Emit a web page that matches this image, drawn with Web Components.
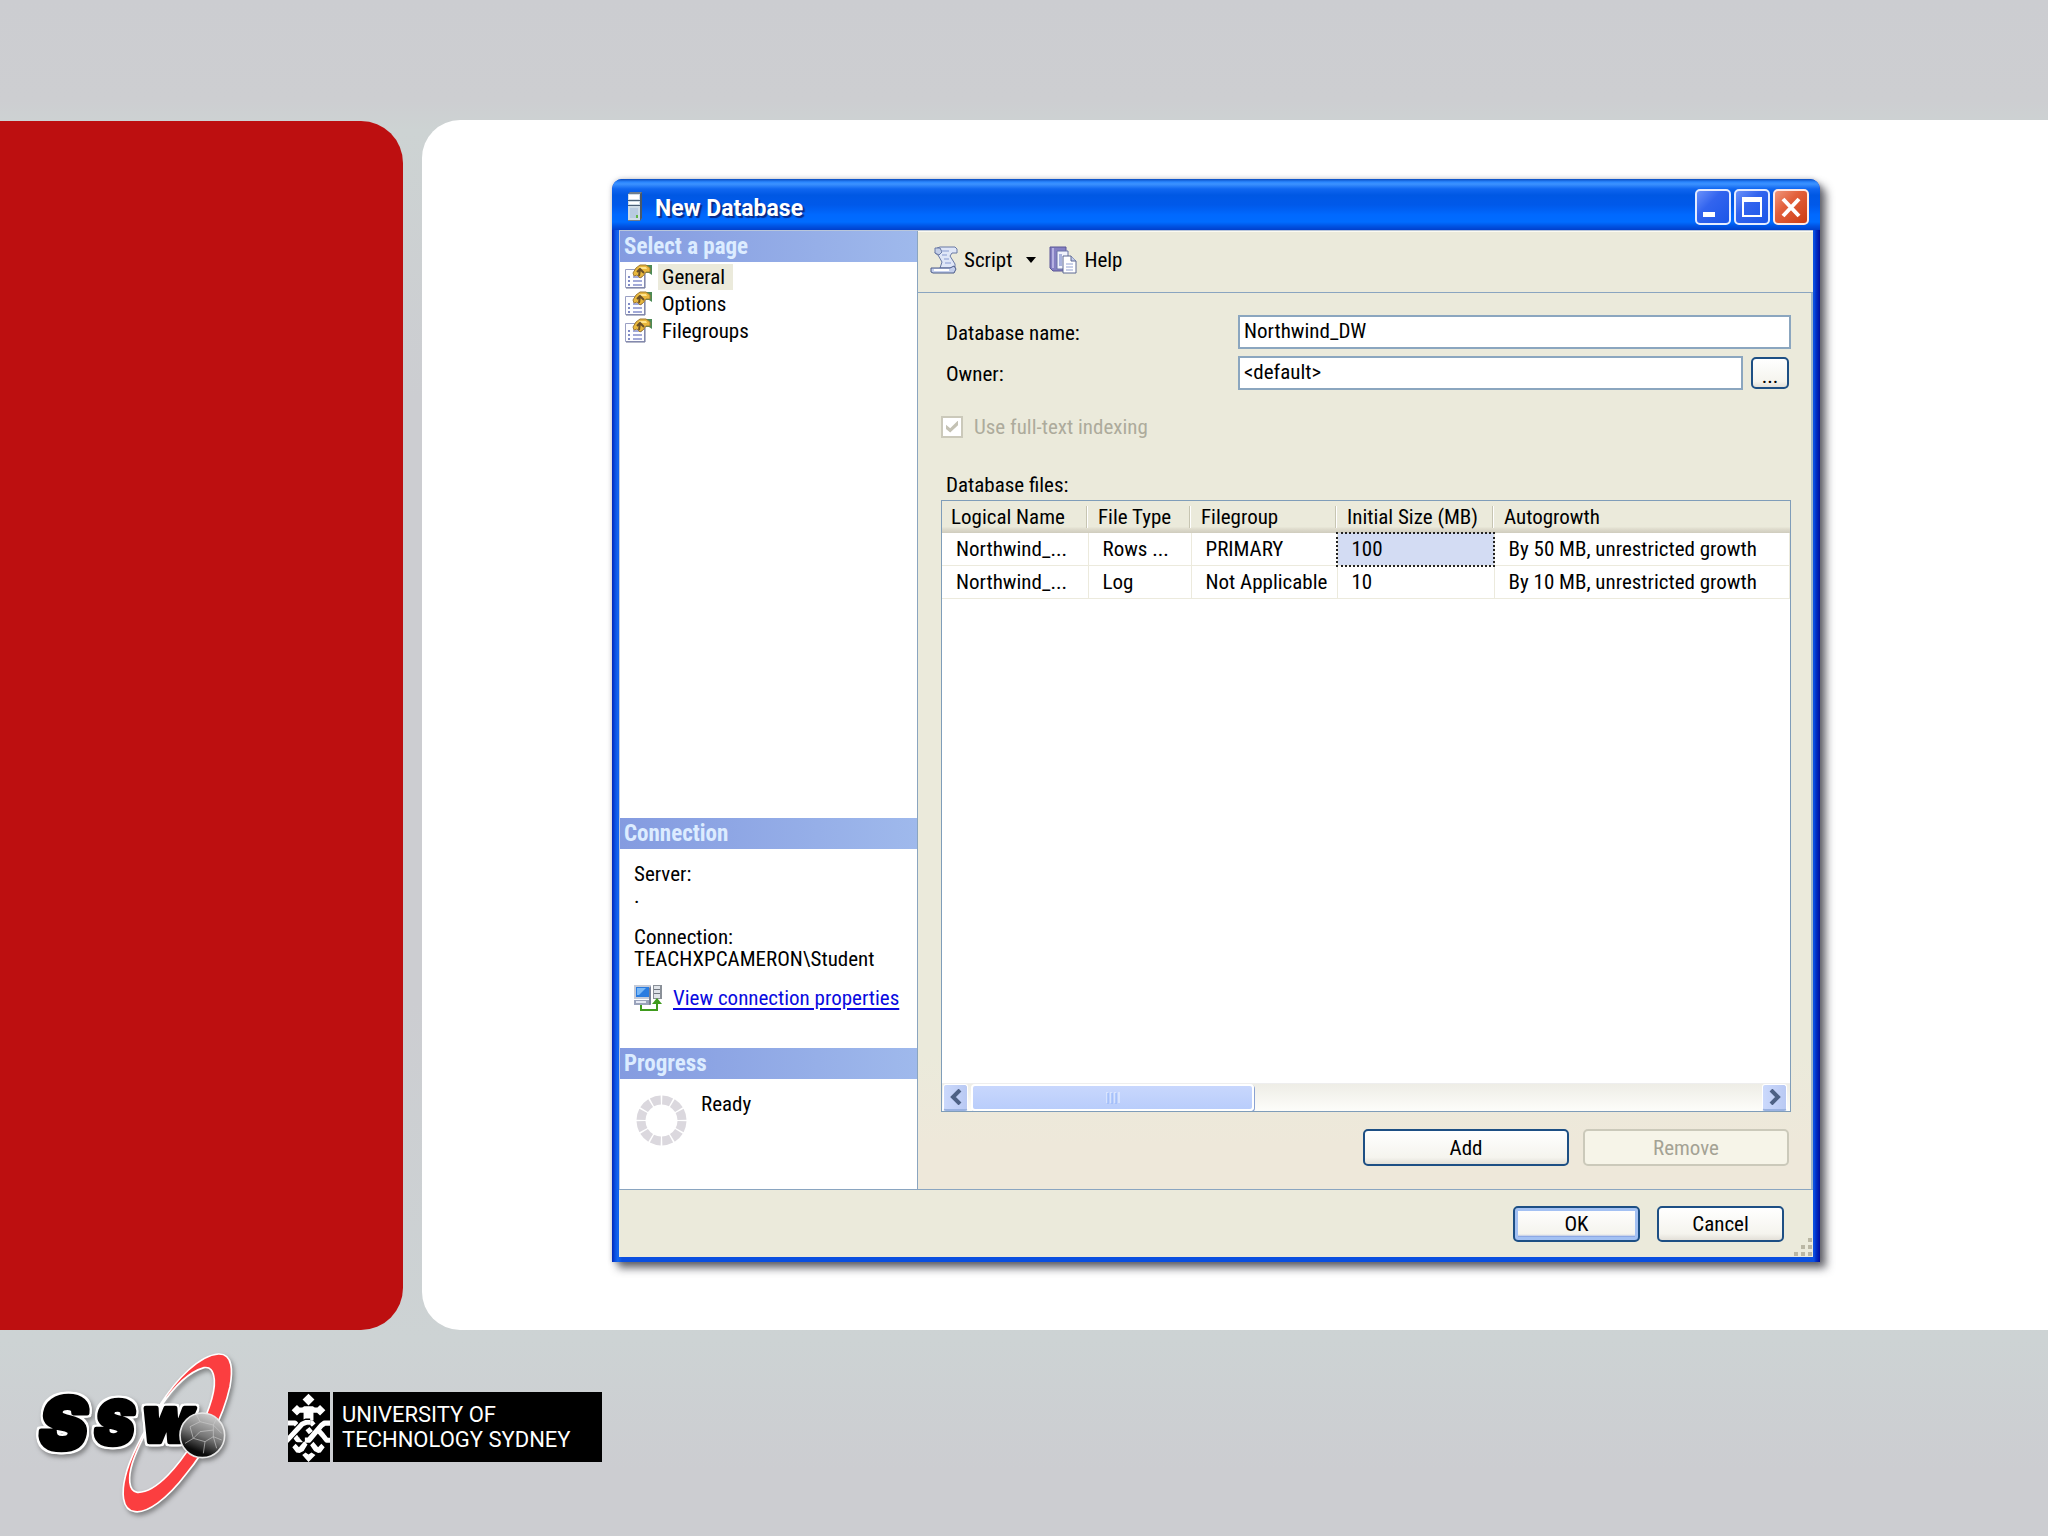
<!DOCTYPE html>
<html lang="en">
<head>
<meta charset="utf-8">
<title>New Database</title>
<style>
  html, body { margin: 0; min-height: 100%; }
  body {
    --ui: "Roboto Condensed", "Liberation Sans", sans-serif;
    --face: #ebeadb;
    --line: #8aa5c0;
    font: 21px/22px var(--ui);
    color: #000;
    background: #cccdd1;
  }
</style>
</head>
<body>
<slide-page>
  <xp-window caption="New Database">
    <page-sidebar slot="side"></page-sidebar>
    <database-pane slot="main"></database-pane>
    <xp-button slot="actions" kind="default">OK</xp-button>
    <xp-button slot="actions">Cancel</xp-button>
  </xp-window>
  <ssw-logo slot="logos"></ssw-logo>
  <uts-logo slot="logos"></uts-logo>
</slide-page>

<script>
function define(name, html, setup) {
  const t = document.createElement('template');
  t.innerHTML = html;
  customElements.define(name, class extends HTMLElement {
    connectedCallback() {
      if (this.shadowRoot) return;
      this.attachShadow({ mode: 'open' }).append(t.content.cloneNode(true));
      if (setup) setup(this, this.shadowRoot);
    }
  });
}

define('slide-page', `
<style>
  :host { display: grid; grid-template-rows: 120px auto 1fr; min-height: 100vh; overflow: hidden;
    background: linear-gradient(#cccdd1 0, #cdced1 100px, #cdd3d3 130px, #cccdd1 400px, #cccdd1 1000px, #cdd3d4 1340px, #cccdd1 1470px); }
  .row { grid-row: 2; display: flex; gap: 19px; }
  .red { flex: none; width: 403px; background: #bd0f10; border-radius: 0 42px 42px 0; margin-top: 1px; }
  .white { flex: 1; min-width: 0; background: #fff; border-radius: 38px 0 0 38px; padding: 59px 228px 68px 190px; }
  footer { grid-row: 3; display: flex; align-items: flex-start; gap: 48px; padding: 20px 0 0 24px; }
</style>
<div class="row"><aside class="red"></aside><main class="white"><slot></slot></main></div>
<footer><slot name="logos"></slot></footer>`);

define('xp-window', `
<style>
  :host { display: block; position: relative; border-radius: 10px 10px 0 0; padding: 0 7px 5px;
    background: linear-gradient(90deg, #0127b8 0, #0a4fe0 3px, #1467f0 6px, #0a4fe0 10px, #0a4fe0 calc(100% - 6px), #0030c8 calc(100% - 4px), #000e9c 100%);
    box-shadow: 6px 6px 9px rgba(40,40,50,.7), 0 0 5px rgba(90,90,110,.35); }
  header { display: flex; align-items: center; gap: 3px; height: 51px; margin: 0 -7px; padding: 4px 11px 0 14px; box-sizing: border-box;
    border-radius: 10px 10px 0 0;
    background: linear-gradient(#0a4cc0 0, #2a86ff 3px, #3c92ff 5px, #0f66f0 10px, #0058e4 16px, #0059ea 26px, #0069ff 36px, #006cff 43px, #0054e4 47px, #0040cc 51px); }
  h1 { margin: 0 auto 0 8px; font: bold 23px/28px Roboto, "Open Sans", sans-serif; color: #fff; text-shadow: 2px 2px 1px #0a2a86; padding-top: 4px; }
  .sys { width: 36px; height: 36px; padding: 0; border: 0; background: none; }
  svg { display: block; }
  .body { background: var(--face); border-top: 1px solid #b9c6da; }
  .split { display: grid; grid-template-columns: 298px 1fr; border-bottom: 1px solid var(--line); }
  .actions { display: flex; justify-content: flex-end; gap: 17px; padding: 16px 29px 15px; position: relative; }
  .actions ::slotted(*) { width: 127px; height: 36px; }
  .grip { position: absolute; right: 0; bottom: 0; }
</style>
<header>
  <svg width="18" height="30" viewBox="0 0 18 30">
    <path d="M2 2 4 0H16V26L14 29H2Z" fill="#6f7d8c"/><path d="M2 2H14V28H2Z" fill="#cfdce6"/>
    <path d="M3 3H13V7H3ZM3 10H13V12H3Z" fill="#fff"/><path d="M2 8H14V9H2ZM2 13H14V14H2Z" fill="#4c5f74"/>
    <path d="M4 16H12V26H4Z" fill="#b8cbe0"/><path d="M14 2 16 0V26L14 29Z" fill="#4b5967"/><path d="M10 23H12V26H10Z" fill="#5fb548"/>
  </svg>
  <h1></h1>
  <button class="sys" aria-label="Minimize"><svg width="36" height="36" viewBox="0 0 36 36">
    <defs><linearGradient id="b" x2="1" y2="1"><stop stop-color="#6f95fb"/><stop offset=".4" stop-color="#3264ee"/><stop offset="1" stop-color="#1a55e8"/></linearGradient></defs>
    <rect x="1" y="1" width="34" height="34" rx="4" fill="url(#b)" stroke="#e4ecff" stroke-width="2"/><path d="M8 23H20V28H8Z" fill="#fff"/></svg></button>
  <button class="sys" aria-label="Maximize"><svg width="36" height="36" viewBox="0 0 36 36">
    <defs><linearGradient id="b2" x2="1" y2="1"><stop stop-color="#6f95fb"/><stop offset=".4" stop-color="#3264ee"/><stop offset="1" stop-color="#1a55e8"/></linearGradient></defs>
    <rect x="1" y="1" width="34" height="34" rx="4" fill="url(#b2)" stroke="#e4ecff" stroke-width="2"/><path d="M8 8H28V28H8ZM10 13V26H26V13Z" fill="#fff" fill-rule="evenodd"/></svg></button>
  <button class="sys" aria-label="Close"><svg width="36" height="36" viewBox="0 0 36 36">
    <defs><linearGradient id="r" x2="1" y2="1"><stop stop-color="#f09a80"/><stop offset=".4" stop-color="#e2603c"/><stop offset="1" stop-color="#cc3a10"/></linearGradient></defs>
    <rect x="1" y="1" width="34" height="34" rx="4" fill="url(#r)" stroke="#ffeae6" stroke-width="2"/><path d="M10 10 26 27M26 10 10 27" stroke="#fff" stroke-width="4"/></svg></button>
</header>
<div class="body">
  <div class="split"><slot name="side"></slot><slot name="main"></slot></div>
  <div class="actions"><slot name="actions"></slot>
    <svg class="grip" width="20" height="20" viewBox="0 0 20 20"><path d="M15 1h4v4h-4zM8 8h4v4H8zM15 8h4v4h-4zM1 15h4v4H1zM8 15h4v4H8zM15 15h4v4h-4z" fill="#bab7a4"/></svg>
  </div>
</div>`, (host, root) => { root.querySelector('h1').textContent = host.getAttribute('caption'); });

define('xp-button', `
<style>
  :host { display: block; }
  button { width: 100%; height: 100%; box-sizing: border-box; padding: 0; border: 2px solid #1d4f84; border-radius: 5px; font: inherit; color: #000;
    background: linear-gradient(#fff, #f5f4ee 80%, #e3e0d8); }
  :host([kind=default]) button { box-shadow: inset 0 0 0 3px #a3c1f3, inset 0 -4px 2px #6c92e6; }
  :host([kind=browse]) button { padding-top: 5px; }
  button:disabled { border-color: #cbc9ba; background: #f6f4e8; color: #a4a294; }
</style>
<button><slot></slot></button>`, (host, root) => { root.querySelector('button').disabled = host.hasAttribute('disabled'); });

define('side-section', `
<style>
  :host { display: block; }
  h2 { margin: 0; height: 31px; padding-left: 4px; font: bold 23px/31px var(--ui); color: #dcecff;
    background: linear-gradient(90deg, #849be0, #9fb9ec); }
</style>
<h2></h2><slot></slot>`, (host, root) => { root.querySelector('h2').textContent = host.getAttribute('caption'); });

define('page-item', `
<style>
  :host { display: block; }
  button { display: flex; align-items: center; gap: 6px; height: 27px; padding: 0 0 0 4px; border: 0; background: none; font: inherit; color: #000; }
  span { padding: 2px 8px 2px 4px; }
  :host([selected]) span { background: #ebeadb; }
</style>
<button>
  <svg width="28" height="25" viewBox="0 0 28 25">
    <path d="M1.500 5.500H20.500V23.500H1.500Z" fill="#fdfdff" stroke="#9aa0c4"/><path d="M21 9V24H2" fill="none" stroke="#6d7296"/>
    <path d="M4 12H6V14H4ZM4 16H6V18H4ZM4 20H6V22H4Z" fill="#7f8ac4"/><path d="M9 13H18M9 17H18M9 21H18" stroke="#a2a9d8" stroke-width="2"/>
    <path d="M22 1H28V11L25 9H22Z" fill="#4d8a55"/>
    <path d="M9 9 12 4 16 1H22L26 4V8H22L19 12 16 14 13 11 10 12Z" fill="#e9b83c" stroke="#a07a34"/>
    <path d="M15 3H22L23 5H16Z" fill="#ffe48c"/><path d="M13 8 16 5 20 9M16 5 15 12" stroke="#6b5028" fill="none" stroke-width="2"/>
  </svg><span><slot></slot></span>
</button>`);

define('page-sidebar', `
<style>
  :host { display: flex; flex-direction: column; background: #fff; border-left: 1px solid #c3cbd8; }
  .pages { flex: 1; }
  .list { padding-top: 1px; }
  .conn { padding: 14px 14px 37px; }
  p { margin: 0 0 19px; }
  .link { display: flex; align-items: center; gap: 11px; margin-top: 15px; height: 26px; }
  .link svg { flex: none; }
  a { color: #0a0ae0; text-decoration-thickness: 2px; text-underline-offset: 3px; white-space: nowrap; }
  .last { margin: 0; }
  .prog { display: flex; gap: 14px; height: 94px; padding: 16px 0 0 16px; }
  .prog span { line-height: 18px; }
</style>
<side-section class="pages" caption="Select a page"><div class="list">
  <page-item selected>General</page-item><page-item>Options</page-item><page-item>Filegroups</page-item>
</div></side-section>
<side-section caption="Connection"><div class="conn">
  <p>Server:<br>.</p>
  <p class="last">Connection:<br>TEACHXPCAMERON\\Student</p>
  <div class="link">
    <svg width="28" height="26" viewBox="0 0 28 26">
      <path d="M0 0H17V14H0Z" fill="#c5cbd8"/><path d="M2 2H15V12H2Z" fill="#2a7ce0"/><path d="M3 3H12L5 10H3Z" fill="#79b8f7"/>
      <path d="M0 15H17V20H0Z" fill="#9aa3bb"/><path d="M2 16H12V18H2Z" fill="#e5e9f4"/><path d="M15 3 17 1V19L15 20Z" fill="#777f95"/>
      <path d="M19 0H28V14H19Z" fill="#8a9098"/><path d="M20 1H26V13H20Z" fill="#dfe3e8"/><path d="M20 4H26V5H20ZM20 8H26V9H20Z" fill="#6f7680"/>
      <path d="M7 20V25H23V18" fill="none" stroke="#3f9b1d" stroke-width="2"/><path d="M18 19 23 13 28 19Z" fill="#3f9b1d"/>
    </svg><a href="#properties">View connection properties</a>
  </div>
</div></side-section>
<side-section caption="Progress"><div class="prog">
  <svg width="51" height="51" viewBox="0 0 51 51"><circle cx="25.500" cy="25.500" r="20.500" fill="none" stroke="#dbd8de" stroke-width="9" pathLength="120" stroke-dasharray="8.600 1.400" stroke-dashoffset="-.7"/></svg>
  <span>Ready</span>
</div></side-section>`);

define('xp-toolbar', `
<style>
  :host { display: flex; align-items: center; height: 62px; padding: 0 0 4px 12px; border-bottom: 1px solid var(--line); border-top: 1px solid #fbfaf2; box-sizing: border-box; }
  button { display: flex; align-items: center; gap: 6px; padding: 0; border: 0; background: none; font: inherit; color: #000; }
  .drop { margin: 0 13px 0 14px; }
  svg { display: block; }
  button + button + button { gap: 7px; }
</style>
<button><svg width="28" height="28" viewBox="0 0 28 28">
  <path d="M7 2 10 1H25L27 3V7H22L20 10 25 18V22H10L12 16 8 9 5 7Z" fill="#dfe6f7" stroke="#6878a4"/>
  <path d="M5 2H10L12 6 9 9 5 7Z" fill="#c4cfe8" stroke="#6878a4"/><path d="M12 5H19M12 9H17M14 13H19M15 17H21" stroke="#b3c0e4" stroke-width="2"/>
  <path d="M1 22H20L24 20 26 23 24 27H3L1 26Z" fill="#c4cfec" stroke="#4a5a88"/><path d="M4 24H19" stroke="#fff" stroke-width="2"/></svg>Script</button>
<button class="drop" aria-label="Script options"><svg width="10" height="6" viewBox="0 0 10 6"><path d="M0 0H10L5 6Z"/></svg></button>
<button><svg width="28" height="28" viewBox="0 0 28 28">
  <path d="M1 1H17V25H4L1 22Z" fill="#8580c2" stroke="#5a5796"/><path d="M3 2H5V22H3Z" fill="#b6b2e2"/>
  <path d="M8 5H19V23H8Z" fill="#f1f3fc" stroke="#6a74a6"/><path d="M10 8H13V20H10Z" fill="#a9b3dd"/>
  <path d="M14 10H22L27 15V27H14Z" fill="#fff" stroke="#5d6993"/><path d="M22 10V15H27" fill="#c4cdea" stroke="#5d6993"/><path d="M17 18H24M17 21H24M17 24H24" stroke="#93a2d2"/></svg>Help</button>`);

define('files-grid', `
<style>
  :host { display: flex; flex-direction: column; min-height: 612px; box-sizing: border-box; border: 1px solid #7f9db9; background: #fff; overflow: hidden; }
  table { border-collapse: collapse; table-layout: fixed; width: 100%; }
  th { height: 32px; padding: 0 0 0 10px; text-align: left; font-weight: normal; white-space: nowrap;
    background: linear-gradient(#ebeadb 80%, #dedbcc 88%, #cfccbe); }
  th > span { display: block; margin-left: -12px; padding-left: 11px; border-left: 1px solid #c7c5b2; box-shadow: inset 1px 0 #fff; }
  th:first-child > span { border: 0; box-shadow: none; padding-left: 11px; }
  td { height: 32px; padding: 0 0 0 14px; border: solid #eceadd; border-width: 0 1px 1px 0; white-space: nowrap; }
  td.on { background: #d3dcf3; outline: 2px dotted #222; outline-offset: -1px; }
  .fill { flex: 1; }
  .bar { display: flex; align-items: stretch; height: 27px; padding: 0 3px 0 1px; background: linear-gradient(#eeede6, #fdfdfa); border-top: 1px solid #eee; }
  button { flex: none; width: 25px; padding: 0; border: 1px solid #fff; border-bottom: 2px solid #9ab2e0; border-radius: 3px; background: linear-gradient(90deg, #cbd9fc, #b9c9f3); }
  .thumb { width: 279px; margin: 0 auto 0 3px; display: grid; place-items: center; border: 2px solid #fff; border-radius: 4px;
    background: linear-gradient(#c8d7fd, #b9cdfb); box-shadow: 1px 1px #8aa2d2; }
  svg { display: block; margin: auto; }
</style>
<table>
  <colgroup><col style="width:146px"><col style="width:103px"><col style="width:146px"><col style="width:157px"><col></colgroup>
  <thead><tr><th><span>Logical Name</span></th><th><span>File Type</span></th><th><span>Filegroup</span></th><th><span>Initial Size (MB)</span></th><th><span>Autogrowth</span></th></tr></thead>
  <tbody>
    <tr><td>Northwind_...</td><td>Rows ...</td><td>PRIMARY</td><td class="on">100</td><td>By 50 MB, unrestricted growth</td></tr>
    <tr><td>Northwind_...</td><td>Log</td><td>Not Applicable</td><td>10</td><td>By 10 MB, unrestricted growth</td></tr>
  </tbody>
</table>
<div class="fill"></div>
<div class="bar">
  <button aria-label="Scroll left"><svg width="12" height="16" viewBox="0 0 12 16"><path d="M10 1 3 8 10 15" fill="none" stroke="#4d6185" stroke-width="4"/></svg></button>
  <div class="thumb"><svg width="14" height="12" viewBox="0 0 14 12"><path d="M1 0V11M5 0V11M9 0V11M13 0V11" stroke="#eef4fe"/><path d="M2 1V12M6 1V12M10 1V12" stroke="#8cb0f8"/></svg></div>
  <button aria-label="Scroll right"><svg width="12" height="16" viewBox="0 0 12 16"><path d="M2 1 9 8 2 15" fill="none" stroke="#4d6185" stroke-width="4"/></svg></button>
</div>`);

define('database-pane', `
<style>
  :host { display: block; border-left: 1px solid var(--line); min-width: 0; }
  .form { padding: 22px 20px 23px 23px; border-right: 2px solid #9db4c8; background: linear-gradient(#ebeadb 85%, #eee8da 95%); }
  .fields { display: grid; grid-template-columns: 297px 1fr 40px; gap: 7px 0; align-items: center; }
  label { padding: 2px 0 0 5px; }
  input[type=text] { display: block; width: 100%; height: 34px; box-sizing: border-box; padding: 0 0 2px 4px; border: 2px solid #8ba6bf; font: inherit; color: #000; background: #fff; }
  #name { grid-column: 2 / 4; }
  .browse { height: 32px; margin-right: 2px; }
  .owner { padding-right: 8px; }
  .check { display: flex; align-items: center; margin-top: 25px; height: 23px; color: #adab9c; }
  .check label { padding: 0 0 0 11px; }
  .check input { appearance: none; flex: none; width: 22px; height: 22px; margin: 0; border: 2px solid #cbc9ba;
    background: #fff; display: grid; place-items: center; }
  .check input::after { content: ""; width: 12px; height: 12px; background: #c4c2b4; clip-path: polygon(0 35%, 35% 65%, 100% 0, 100% 40%, 35% 100%, 0 70%); }
  .cap { margin: 34px 0 2px 5px; line-height: 26px; }
  .tools { display: flex; justify-content: flex-end; gap: 14px; margin: 17px 2px 0 0; }
  .tools xp-button { width: 206px; height: 37px; }
</style>
<xp-toolbar></xp-toolbar>
<div class="form">
  <div class="fields">
    <label for="name">Database name:</label><input id="name" type="text" value="Northwind_DW">
    <label for="owner">Owner:</label><div class="owner"><input id="owner" type="text" value="&lt;default&gt;"></div><xp-button class="browse" kind="browse">...</xp-button>
  </div>
  <div class="check"><input id="ft" type="checkbox" checked disabled><label for="ft">Use full-text indexing</label></div>
  <div class="cap">Database files:</div>
  <files-grid></files-grid>
  <div class="tools"><xp-button>Add</xp-button><xp-button disabled>Remove</xp-button></div>
</div>`);

define('ssw-logo', `
<style>
  :host { display: block; }
  svg { display: block; filter: drop-shadow(2px 3px 2px rgba(60,60,60,.5)); }
  text { font-family: Inter, "DejaVu Sans", sans-serif; font-style: italic; font-weight: 900; stroke: #000; stroke-linejoin: round; stroke-width: 14px;
    filter: drop-shadow(6px 0 0 #fff) drop-shadow(-6px 0 0 #fff) drop-shadow(0 6px 0 #fff) drop-shadow(0 -6px 0 #fff); }
  .s1 { font-size: 216px; } .s2 { font-size: 176px; } .w { font-size: 142px; }
</style>
<svg width="216" height="170" viewBox="72 60 648 510">
  <defs><linearGradient id="g" x1=".7" y1="0" x2=".3" y2="1"><stop stop-color="#d2d2d2"/><stop offset=".5" stop-color="#777"/><stop offset=".85" stop-color="#0a0a0a"/></linearGradient></defs>
  <path fill="#fb3e40" fill-rule="evenodd" stroke="#fff" stroke-width="5" d="M655 72C700 70 698 125 690 170C668 270 610 370 560 430C500 510 440 550 405 545C362 540 366 480 376 440C390 375 440 290 480 225C530 145 600 76 655 72ZM612 113C560 128 515 180 482 230C445 290 410 360 397 400C385 440 384 484 412 487C470 490 540 400 580 335C620 265 646 190 643 150C640 120 630 110 612 113Z"/>
  <text><tspan class="s1" x="118" y="356">S</tspan><tspan class="s2" x="284" y="343">S</tspan><tspan class="w" x="424" y="335">W</tspan></text>
  <circle cx="607" cy="316" r="67" fill="url(#g)" stroke="#e8e8e8" stroke-width="5"/>
  <path d="M570 290 600 275 640 285 665 310M600 275 590 255M640 285 650 265M570 290 580 325 615 335 640 320 665 330M615 335 610 370M640 320 640 285M580 325 555 340M640 320 650 355M580 325 600 305 640 300" fill="none" stroke="#c9c9c9" stroke-width="2"/>
</svg>`);

define('uts-logo', `
<style>
  :host { display: flex; gap: 3px; margin-top: 42px; height: 70px; }
  .mark { background: #000; }
  svg { display: block; }
  .name { background: #000; color: #fff; width: 269px; box-sizing: border-box; padding: 10px 0 0 9px; font: 400 22px/25px Roboto, sans-serif; white-space: nowrap; }
</style>
<div class="mark"><svg width="42" height="70" viewBox="11 11 127 212">
  <path fill="#fff" d="M73 16 91 34 73 52 55 34ZM60 54H86L92 58H100L108 50 124 66 108 82 99 74H88V97H58V74H47L38 82 22 66 38 50 46 58H54Z"/>
  <g fill="none" stroke-linejoin="round">
    <path d="M8 105H32L42 116M64 104H82L116 142 128 157H142M30 142 40 156H52L68 142" stroke="#fff" stroke-width="15"/>
    <path d="M6 159 56 106 68 102H78" stroke="#000" stroke-width="22"/><path d="M4 162 54 108 66 103H78" stroke="#fff" stroke-width="15"/>
    <path d="M52 158 104 112" stroke="#000" stroke-width="22"/><path d="M70 122 80 134M62 157H74L112 112 122 105H142" stroke="#fff" stroke-width="16"/>
  </g>
  <path fill="#fff" d="M24 178 34 168 44 178 60 160 70 170 58 190 46 196 36 194ZM122 178 112 168 102 178 88 162 78 172 90 190 102 196 110 194ZM54 202 64 194 73 200 82 194 94 202 73 223Z"/>
</svg></div>
<div class="name">UNIVERSITY OF<br>TECHNOLOGY SYDNEY</div>`);
</script>
</body>
</html>
